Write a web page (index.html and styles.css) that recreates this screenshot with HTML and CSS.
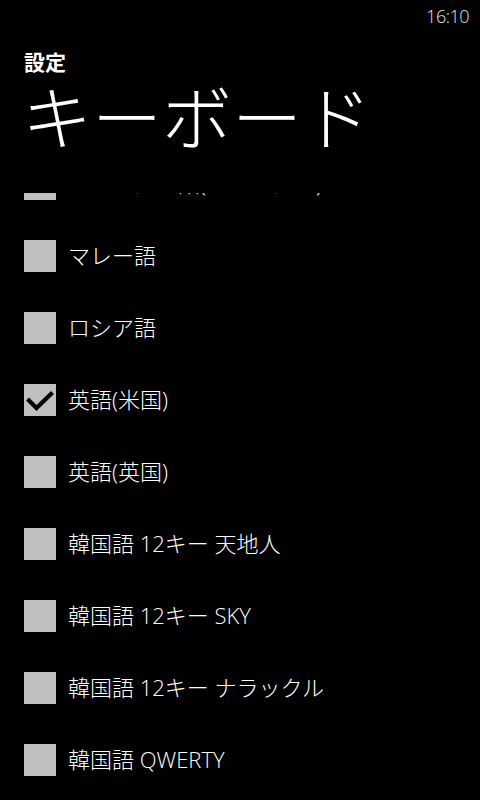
FILE: index.html
```html
<!DOCTYPE html>
<html lang="ja">
<head>
<meta charset="utf-8">
<link rel="stylesheet" href="styles.css">
</head>
<body>
<div class="phone">
  <div class="status"><span class="time">16:10</span></div>
  <div class="header">
    <div class="app">設定</div>
    <div class="title">キーボード</div>
  </div>
  <div class="viewport">
    <ul class="list">
      <li class="row"><span class="box"></span><span class="label">ポルトガル語(ポルトガル)</span></li>
      <li class="row"><span class="box"></span><span class="label">マレー語</span></li>
      <li class="row"><span class="box"></span><span class="label">ロシア語</span></li>
      <li class="row"><span class="box checked"><svg class="check" viewBox="0 0 32 32" width="32" height="32"><path d="M5 16.5 L12.5 24 L27 10" fill="none" stroke="#000" stroke-width="4.2" stroke-linecap="square" stroke-linejoin="miter"/></svg></span><span class="label">英語(米国)</span></li>
      <li class="row"><span class="box"></span><span class="label">英語(英国)</span></li>
      <li class="row"><span class="box"></span><span class="label">韓国語 12キー 天地人</span></li>
      <li class="row"><span class="box"></span><span class="label">韓国語 12キー SKY</span></li>
      <li class="row"><span class="box"></span><span class="label">韓国語 12キー ナラックル</span></li>
      <li class="row"><span class="box"></span><span class="label">韓国語 QWERTY</span></li>
    </ul>
  </div>
</div>
</body>
</html>
```
FILE: styles.css
```css
html, body {
  margin: 0;
  padding: 0;
  background: #000;
}
.phone {
  width: 480px;
  height: 800px;
  overflow: hidden;
  background: #000;
  color: #fff;
  font-family: "Open Sans", "Noto Sans CJK JP", sans-serif;
}
.status {
  height: 32px;
  display: flex;
  justify-content: flex-end;
  align-items: center;
  padding-right: 11px;
}
.time {
  font-family: "Open Sans", sans-serif;
  font-weight: 300;
  font-size: 18px;
  letter-spacing: -0.5px;
  color: #e0e0e0;
}
.header {
  padding-left: 24px;
  margin-top: 15px;
}
.app {
  font-family: "Noto Sans CJK JP", sans-serif;
  font-weight: 700;
  font-size: 21px;
  line-height: 28px;
}
.title {
  font-family: "Noto Sans CJK JP", sans-serif;
  font-weight: 300;
  font-size: 70px;
  line-height: 80px;
  margin-left: -2px;
}
.viewport {
  margin-top: 38px;
  height: 607px;
  overflow: hidden;
}
.list {
  list-style: none;
  margin: -45px 0 0 0;
  padding: 0 0 0 24px;
}
.row {
  height: 72px;
  display: flex;
  align-items: center;
}
.box {
  width: 32px;
  height: 32px;
  background: #bfbfbf;
  flex: none;
  display: block;
}
.check {
  display: block;
}
.label {
  margin-left: 12px;
  margin-top: -2px;
  font-size: 22px;
  font-weight: 300;
  line-height: 30px;
  color: #fff;
  white-space: nowrap;
}
```
